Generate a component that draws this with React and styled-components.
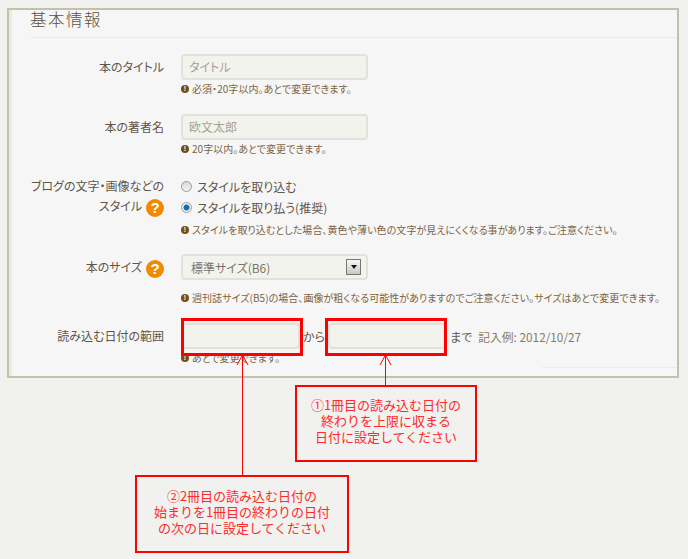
import React from "react";
import styled, { createGlobalStyle } from "styled-components";

const GlobalStyle = createGlobalStyle`
  html, body {
    margin: 0;
    padding: 0;
    background: #f1f1ef;
  }
  body {
    font-family: "Noto Sans CJK JP", "Noto Sans", sans-serif;
    color: #5f5549;
  }
`;

const Page = styled.div`
  position: relative;
  width: 688px;
  height: 559px;
  padding: 8px 0 0 7px;
  box-sizing: border-box;
  overflow: hidden;
`;

const Panel = styled.div`
  position: relative;
  box-sizing: border-box;
  width: 672px;
  height: 370px;
  background: #f6f6f6;
  border: 2px solid #c4c1a8;
  box-shadow: inset 3px 0 0 #eceade;
  font-feature-settings: "palt";
`;

const Heading = styled.h2`
  margin: 0 0 0 21px;
  height: 27px;
  font-size: 16.5px;
  line-height: 19px;
  font-weight: 300;
  letter-spacing: 1.5px;
  color: #5a5040;
  border-bottom: 1px solid #eaeaea;
`;

const Form = styled.div`
  display: flex;
  flex-direction: column;
  padding-top: 16px;
`;

const Row = styled.div`
  display: grid;
  grid-template-columns: 155px 1fr;
  column-gap: 17px;
  margin-bottom: ${(p) => p.$gap}px;
`;

const Label = styled.div`
  text-align: right;
  font-size: 12px;
  line-height: 20px;
  white-space: nowrap;
  padding-top: ${(p) => p.$top || 0}px;
  color: #5f5549;
`;

const Control = styled.div`
  display: flex;
  flex-direction: column;
`;

const TextInput = styled.div`
  box-sizing: border-box;
  flex: none;
  width: ${(p) => p.$width || 187}px;
  height: 26px;
  padding-left: 6px;
  font-size: 12px;
  line-height: 22px;
  color: #a8a18c;
  background: #f3f3ee;
  border: 2px solid #e2e1da;
  border-radius: 4px;
`;

const Note = styled.div`
  display: flex;
  align-items: center;
  gap: 3px;
  margin-top: ${(p) => p.$top || 2}px;
  height: 14px;
  font-size: 10px;
  line-height: 14px;
  letter-spacing: 0.05px;
  white-space: nowrap;
  color: #7c6444;
`;

const NoteIcon = styled.span`
  display: inline-flex;
  justify-content: center;
  align-items: center;
  width: 8px;
  height: 8px;
  border-radius: 50%;
  background: #7a4c14;
  color: #f6f6f6;
  font: bold 7px/8px "Liberation Sans", sans-serif;
`;

const Help = styled.span`
  display: inline-flex;
  justify-content: center;
  align-items: center;
  width: 18px;
  height: 18px;
  margin-left: 4px;
  vertical-align: middle;
  border-radius: 50%;
  background: #f08a00;
  color: #fff;
  font: bold 15px/18px "Liberation Sans", sans-serif;
`;

const RadioRow = styled.label`
  display: flex;
  align-items: center;
  gap: 5px;
  height: 21px;
  font-size: 12px;
  color: #5f5549;
`;

const Radio = styled.span`
  box-sizing: border-box;
  width: 11px;
  height: 11px;
  border-radius: 50%;
  border: 1px solid #9a9a9a;
  background: ${(p) =>
    p.$on
      ? "radial-gradient(circle, #0f6fb0 0, #0f6fb0 2.5px, #f2f2f2 3.5px)"
      : "linear-gradient(#d8d8d8, #f4f4f4)"};
`;

const Select = styled.div`
  box-sizing: border-box;
  display: flex;
  align-items: center;
  justify-content: space-between;
  width: 187px;
  height: 26px;
  padding: 0 5px 0 8px;
  font-size: 12px;
  color: #7a7468;
  background: #f3f3ee;
  border: 2px solid #e2e1da;
  border-radius: 4px;
`;

const SelectButton = styled.span`
  box-sizing: border-box;
  display: flex;
  justify-content: center;
  align-items: center;
  width: 15px;
  height: 16px;
  border: 1px solid #77776f;
  background: linear-gradient(#f6f6f6, #c8c8c8);

  &::after {
    content: "";
    border-left: 3px solid transparent;
    border-right: 3px solid transparent;
    border-top: 4px solid #111;
  }
`;

const DateLine = styled.div`
  display: flex;
  align-items: center;
  font-size: 12px;
  color: #5f5549;
`;

const Between = styled.span`
  margin: ${(p) => p.$margin};
`;

const Example = styled.span`
  font-size: 11.8px;
  color: #8a7a5e;
`;

const PanelFoot = styled.div`
  position: absolute;
  right: 0;
  bottom: 8px;
  width: 135px;
  border-top: 1px solid #ebebeb;
`;

/* annotations drawn over the screenshot */
const Marker = styled.div`
  position: absolute;
  box-sizing: border-box;
  left: ${(p) => p.$left}px;
  top: 318px;
  width: 122px;
  height: 38px;
  border: 3px solid #ff0000;
`;

const Callout = styled.div`
  position: absolute;
  box-sizing: border-box;
  display: flex;
  align-items: center;
  justify-content: center;
  left: ${(p) => p.$left}px;
  top: ${(p) => p.$top}px;
  width: ${(p) => p.$width}px;
  height: ${(p) => p.$height}px;
  padding-bottom: 5px;
  border: 2px solid #ff0000;
  background: #f1f1ef;
  color: #ff2a2a;
  font-size: 13px;
  line-height: 16px;
  text-align: center;
  white-space: pre-line;
`;

const ArrowSvg = styled.svg`
  position: absolute;
  left: 0;
  top: 0;
  pointer-events: none;
`;

export default function App() {
  return (
    <>
      <GlobalStyle />
      <Page>
        <Panel>
          <Heading>基本情報</Heading>
          <Form>
            <Row $gap={18}>
              <Label $top={3}>本のタイトル</Label>
              <Control>
                <TextInput>タイトル</TextInput>
                <Note>
                  <NoteIcon>!</NoteIcon>必須・20字以内。あとで変更できます。
                </Note>
              </Control>
            </Row>
            <Row $gap={20}>
              <Label $top={3}>本の著者名</Label>
              <Control>
                <TextInput>欧文太郎</TextInput>
                <Note>
                  <NoteIcon>!</NoteIcon>20字以内。あとで変更できます。
                </Note>
              </Control>
            </Row>
            <Row $gap={17}>
              <Label>
                ブログの文字・画像などの
                <br />
                スタイル<Help>?</Help>
              </Label>
              <Control>
                <RadioRow>
                  <Radio />
                  スタイルを取り込む
                </RadioRow>
                <RadioRow>
                  <Radio $on />
                  スタイルを取り払う(推奨)
                </RadioRow>
                <Note $top={5}>
                  <NoteIcon>!</NoteIcon>
                  スタイルを取り込むとした場合、黄色や薄い色の文字が見えにくくなる事があります。ご注意ください。
                </Note>
              </Control>
            </Row>
            <Row $gap={18}>
              <Label $top={3}>
                本のサイズ<Help>?</Help>
              </Label>
              <Control>
                <Select>
                  標準サイズ(B6)
                  <SelectButton />
                </Select>
                <Note $top={11}>
                  <NoteIcon>!</NoteIcon>
                  週刊誌サイズ(B5)の場合、画像が粗くなる可能性がありますのでご注意ください。サイズはあとで変更できます。
                </Note>
              </Control>
            </Row>
            <Row $gap={0}>
              <Label $top={3}>読み込む日付の範囲</Label>
              <Control>
                <DateLine>
                  <TextInput $width={119} />
                  <Between $margin="0 3px 0 3px">から</Between>
                  <TextInput $width={119} />
                  <Between $margin="0 6px 0 3px">まで</Between>
                  <Example>記入例: 2012/10/27</Example>
                </DateLine>
                <Note>
                  <NoteIcon>!</NoteIcon>あとで変更できます。
                </Note>
              </Control>
            </Row>
          </Form>
          <PanelFoot />
        </Panel>
        <Marker $left={181} />
        <Marker $left={325} />
        <ArrowSvg width="688" height="559" viewBox="0 0 688 559" fill="none" stroke="#ff0000">
          <path d="M242.5 356V476M237 365L242.5 355L248 365" />
          <path d="M385.5 356V386M380 365L385.5 355L391 365" />
        </ArrowSvg>
        <Callout $left={295} $top={385} $width={182} $height={77}>
          {"①1冊目の読み込む日付の\n終わりを上限に収まる\n日付に設定してください"}
        </Callout>
        <Callout $left={135} $top={475} $width={214} $height={78}>
          {"②2冊目の読み込む日付の\n始まりを1冊目の終わりの日付\nの次の日に設定してください"}
        </Callout>
      </Page>
    </>
  );
}
